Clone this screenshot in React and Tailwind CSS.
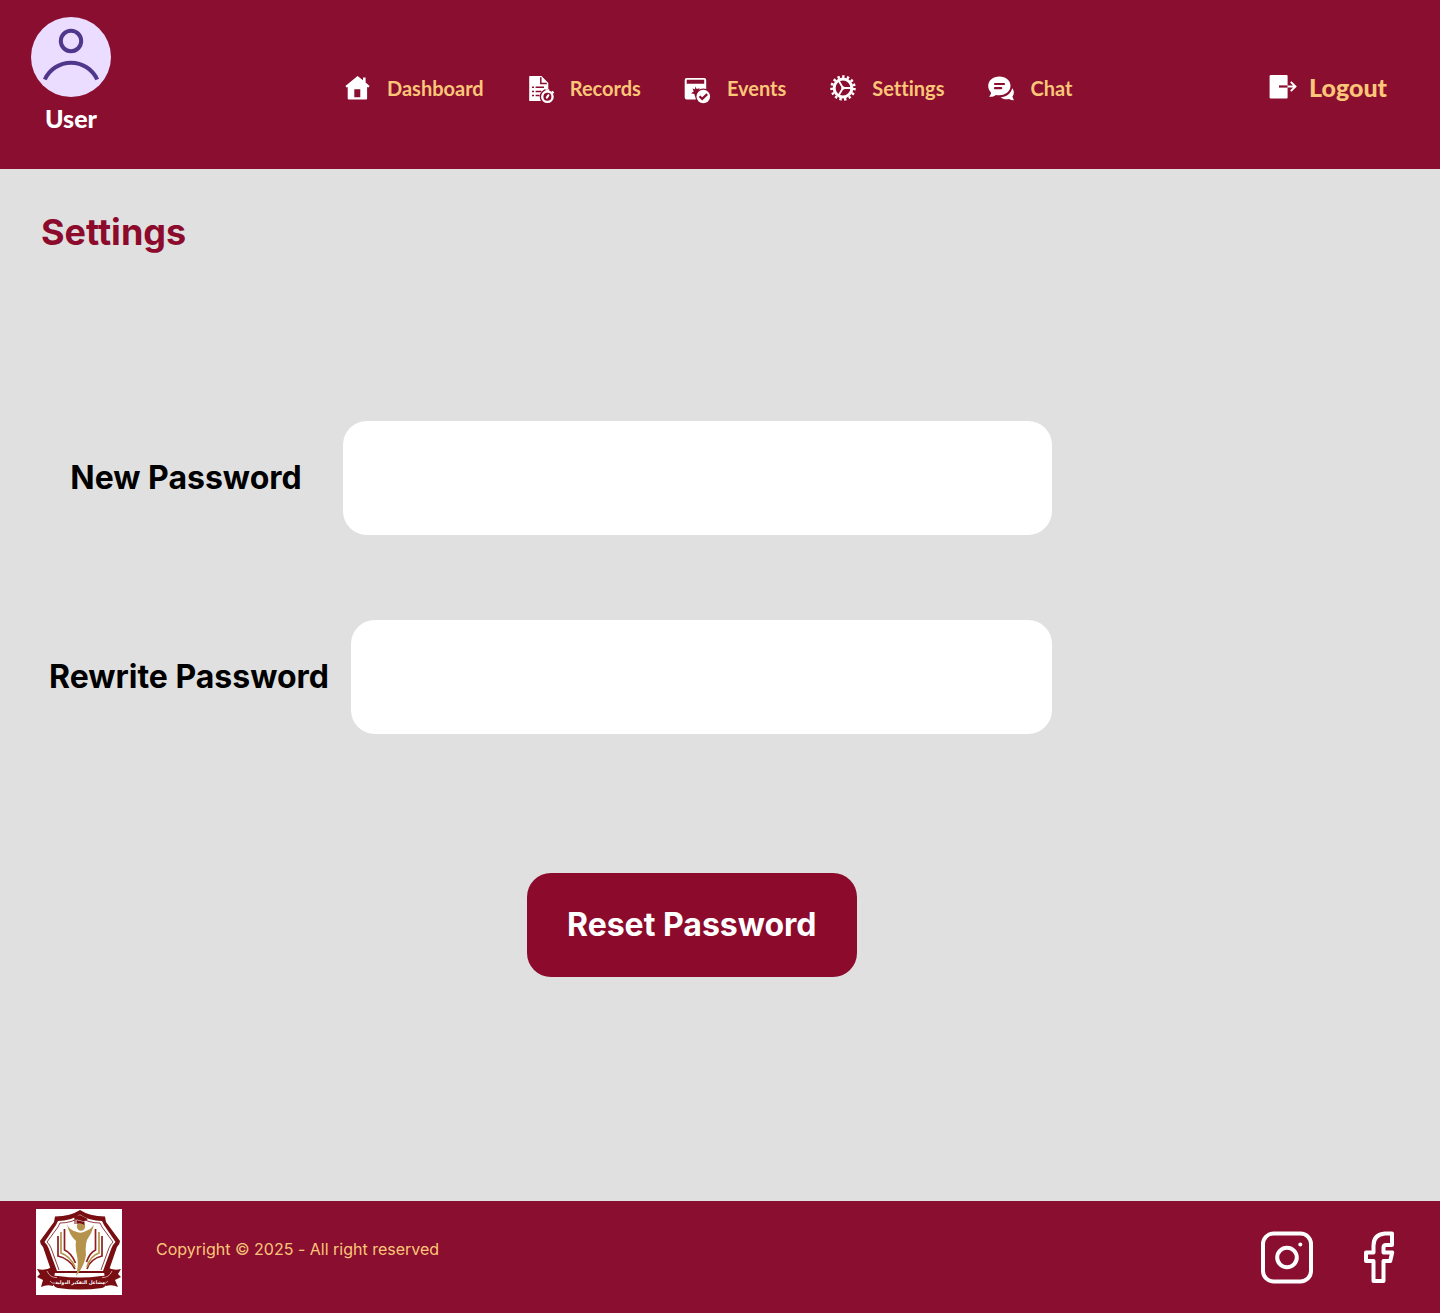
import React from "react";

function HomeIcon() {
  return (
    <svg viewBox="0 0 28 28" className="size-7" fill="#fff" aria-hidden="true">
      <path fillRule="evenodd" d="M13.6 2 19 6.2V3.4h2.6v5.2l4 3.4-1.2 1.4-1.3-.5v11.6q0 1-1 1H4.7q-1 0-1-1V12.9l-1.1.5-1.2-1.5Zm-3.3 13.2v8h6v-8Z" />
    </svg>
  );
}

function RecordsIcon() {
  return (
    <svg viewBox="0 0 28 28" className="size-7 overflow-visible" aria-hidden="true">
      <path fill="#fff" d="M2.200 2.500Q2.200 2 2.800 2H14.500l6.800 7v8l-6 10H2.800q-.6 0-.6-.6Z" />
      <path fill="none" stroke="#890e2f" strokeWidth="1.500" d="M13.800 3.200v6.300h6M5 13.200h2M8.600 13.200h8.400M5 17.400h2M8.600 17.400h5.600M5 21.600h2M8.600 21.600h4" />
      <circle cx="20.400" cy="22.700" r="7.700" fill="#890e2f" />
      <circle cx="20.400" cy="22.700" r="5.200" fill="none" stroke="#fff" strokeWidth="2.400" />
      <path fill="none" stroke="#fff" strokeWidth="2.200" strokeLinecap="round" d="m19.900 23.500 1.400-2.200" />
      <path stroke="#fff" strokeWidth="2" d="M18.600 16.200h3.600M24.800 17.400l1.800 1.800" />
    </svg>
  );
}

function EventsIcon() {
  return (
    <svg viewBox="0 0 28 28" className="size-7 overflow-visible" aria-hidden="true">
      <path fill="#fff" fillRule="evenodd" d="M2.700 4h17.500q2 0 2 2v17.400q0 2-2 2H2.700q-2 0-2-2V6q0-2 2-2Zm0 1.800v4h17.500v-4Z" />
      <path fill="#890e2f" d="m11.3 12.500 1.400 2.600 3.100-.8-1.500 3.100 2.100 2.500-3.200.5-1.900 2.800-1-3.100-3.300-.8 2.700-1.800-1.100-3 2.400.7Z" />
      <circle cx="19.300" cy="22.500" r="8" fill="#890e2f" />
      <circle cx="19.300" cy="22.500" r="6.800" fill="#fff" />
      <path fill="none" stroke="#890e2f" strokeWidth="2.200" d="m15.500 22.300 2.700 2.600 5-4.800" />
    </svg>
  );
}

function GearIcon() {
  return (
    <svg viewBox="0 0 28 28" className="size-7" fill="none" stroke="#fff" aria-hidden="true">
      <circle cx="14" cy="14" r="11.4" strokeWidth="2.7" strokeDasharray="2.4 2.375" />
      <circle cx="14" cy="14" r="8.9" strokeWidth="3" />
      <path strokeWidth="1.8" d="M14 14h8M14 14 9.7 6.8M14 14l-4.3 7.2" />
      <circle cx="14" cy="14" r="1.7" fill="#fff" stroke="none" />
    </svg>
  );
}

function ChatIcon() {
  return (
    <svg viewBox="0 0 28 28" className="size-7" aria-hidden="true">
      <path fill="#fff" d="M25.2 14.3c2.4 2.9 2 6.2.2 8.2l1.5 3.7c-1.8.1-3.3-.3-4.8-1.2-3.2.7-6.2.2-8.4-1.7 5.6-.3 10-3.3 11.5-9Z" />
      <path fill="#fff" d="M12.4 2.6c6.4 0 11.1 4 11.1 9.2s-4.7 9.5-11.1 9.5c-1.3 0-2.4-.1-3.4-.4-2 1.500-4.2 2-7 1.8 1.3-1.2 2-2.4 2-4.2-1.8-1.8-2.8-4-2.8-6.500 0-5.300 4.800-9.400 11.200-9.400Z" />
      <path stroke="#890e2f" strokeWidth="2.200" strokeLinecap="round" d="M8 10h9M8 14.200h6.200" />
    </svg>
  );
}

function LogoutIcon() {
  return (
    <svg viewBox="0 0 28 28" className="size-7" fill="none" stroke="#fff" aria-hidden="true">
      <rect x="0.600" y="2" width="18" height="23.500" rx="1" fill="#fff" stroke="none" />
      <path stroke="#890e2f" strokeWidth="2.2" d="M10 13.500h8.600" />
      <path strokeWidth="2" d="M18.600 13.500h7.900M21.800 8.900l4.600 4.600-4.600 4.600" />
    </svg>
  );
}

function Avatar() {
  return (
    <svg viewBox="0 0 80 80" className="size-20" aria-hidden="true">
      <circle cx="40" cy="40" r="40" fill="#eaddff" />
      <g fill="none" stroke="#4f378b" strokeWidth="4">
        <circle cx="40" cy="24" r="10.200" />
        <path d="M13.800 62.500a28.800 28.800 0 0 1 52.400 0" />
      </g>
    </svg>
  );
}

function SchoolCrest() {
  return (
    <svg viewBox="0 0 86 86" className="size-[86px]" role="img" aria-label="مشاعل التفكير الدولية">
      <path fill="#fff" d="M0 0h86v86H0z" />
      <path
        fill="#780d12"
        fillRule="evenodd"
        d="M44 1Q35 7 19 7.500L18 13 4 32q0 3 3 6l9 26h56l9-26q3-3 3-6L70 13l-1-5.500Q53 7 44 1Zm0 4.500Q53 12 66 12l2 4 11.500 17q-3 3-4 6L67 62H21l-8.500-23q-1-3-4-6L20 16l2-4q13 0 22-6.500Z"
      />
      <path fill="none" stroke="#780d12" strokeWidth=".8" d="M44 8Q36 14 24 14l-2 4-11 15q3 3 4 6l8 22M44 8q8 6 20 6l2 4 11 15q-3 3-4 6l-8 22" />
      <g fill="none" strokeWidth="1.700">
        <path stroke="#8f1f1f" d="M22 27v20q12 3 17 13M66 27v20q-12 3-15 13" />
        <path stroke="#b5934d" d="M25 23v21q9 3 14 14M63 23v21q-9 3-12 14" />
        <path stroke="#8f1f1f" d="M28.500 20v21q7 3 11 13M59.500 20v21q-6 3-9 12" />
      </g>
      <path fill="#b5934d" d="M31 15q2 6 10 8 4 2 9-1 5-2 8-6-2 8-7 15-2 6-1 15-2 12-10 21 3-12 1-20-2-9-1-15-7-6-9-17Z" />
      <circle cx="45" cy="17.500" r="4.200" fill="#b5934d" />
      <path fill="#780d12" d="m38 8 6-2 8 4-4 2.500-9-2.500Zm2.500 3 8 2v3q-4-3-8-1Z" />
      <path fill="none" stroke="#780d12" d="M39 9v6" />
      <path fill="#780d12" d="M1 60q9 2 15-2l3 5-2 14q-6-2-12 1l2-7-6-3 3-3Zm84 0q-8 2-14-2l-3 5 2 14q6-2 12 1l-3-7 6-3-3-3Z" />
      <path fill="#780d12" d="M12 61q2 6 10 6 22 3 43 0 8 0 10-6 0 8-3 11-2 6-6 7-22 3-44 0-5-1-6-7-4-3-4-11Z" />
      <path fill="none" stroke="#fff" strokeWidth=".6" d="M11 62q3 7 10 6.500M76 62q-3 7-10 6.500M14 72q2 3 5 2M72 72q-2 3-5 2" />
      <text x="44" y="75" textAnchor="middle" fill="#fff" fontFamily="DejaVu Sans Condensed, DejaVu Sans, sans-serif" fontSize="5" fontWeight="700" direction="rtl">مشاعل التفكير الدولية</text>
    </svg>
  );
}

function InstagramIcon() {
  return (
    <svg viewBox="0 0 54 54" className="size-[54px]" fill="none" stroke="#fff" aria-hidden="true">
      <rect x="3" y="3.500" width="48" height="48" rx="10.500" strokeWidth="4" />
      <circle cx="27" cy="27.500" r="9.800" strokeWidth="4" />
      <circle cx="40.300" cy="14.500" r="2" fill="#fff" stroke="none" />
    </svg>
  );
}

function FacebookIcon() {
  return (
    <svg viewBox="0 0 32 54" className="h-[54px] w-8" fill="none" stroke="#fff" strokeWidth="4" strokeLinejoin="round" aria-hidden="true">
      <path d="M29 3.500h-7q-11.500 1-11.500 12v7H3v8.500h7.500v20h10V31h6.700l2-8.500h-8.700v-5q0-2.500 2.500-2.500h6Z" />
    </svg>
  );
}

const links = [
  { label: "Dashboard", Icon: HomeIcon },
  { label: "Records", Icon: RecordsIcon },
  { label: "Events", Icon: EventsIcon },
  { label: "Settings", Icon: GearIcon },
  { label: "Chat", Icon: ChatIcon },
];

export default function App() {
  return (
    <div className="flex min-h-screen flex-col bg-[#e0e0e0] font-['Inter',sans-serif] [font-variant-ligatures:none]">
      <header className="flex items-start bg-[#890e2f] pt-[17px] pr-[53px] pb-9 pl-[31px] font-['Lato',sans-serif]">
        <div className="flex w-20 flex-col items-center">
          <Avatar />
          <span className="mt-1.5 text-[25px] leading-[30px] font-black text-white">User</span>
        </div>
        <nav className="mt-[57px] ml-[233px] flex gap-[43px]">
          {links.map(({ label, Icon }) => (
            <a key={label} href="#" className="flex items-center gap-[15px] text-xl leading-7 font-bold text-[#fcc679]">
              <Icon />
              {label}
            </a>
          ))}
        </nav>
        <button type="button" className="mt-[55px] ml-auto flex items-center gap-3 text-[25px] leading-[30px] font-black text-[#fcc679]">
          <LogoutIcon />
          Logout
        </button>
      </header>

      <main className="flex-1 px-[41px] pt-10">
        <h1 className="text-4xl leading-[46px] font-bold text-[#8c0b2c]">Settings</h1>
        <form className="mt-[166px] flex max-w-[1011px] flex-col">
          <div className="flex items-center gap-3">
            <label htmlFor="new-password" className="w-[290px] shrink-0 text-center text-[32px] leading-10 font-bold text-black">
              New Password
            </label>
            <input id="new-password" type="password" className="h-[114px] min-w-0 flex-1 rounded-3xl bg-white px-8 text-3xl" />
          </div>
          <div className="mt-[85px] flex items-center gap-3.5">
            <label htmlFor="rewrite-password" className="w-[296px] shrink-0 text-center text-[32px] leading-10 font-bold text-black">
              Rewrite Password
            </label>
            <input id="rewrite-password" type="password" className="h-[114px] min-w-0 flex-1 rounded-3xl bg-white px-8 text-3xl" />
          </div>
          <button type="button" className="mt-[139px] ml-[486px] self-start rounded-3xl bg-[#8c0b2c] px-10 py-8 text-[32px] leading-10 font-bold text-white">
            Reset Password
          </button>
        </form>
      </main>

      <footer className="flex items-start bg-[#890e2f] pt-2 pr-[45px] pb-[18px] pl-9">
        <SchoolCrest />
        <p className="mt-7 ml-[34px] text-base leading-6 text-[#fcc679]">Copyright © 2025 - All right reserved</p>
        <div className="mt-[21px] ml-auto flex gap-[49px]">
          <a href="#" aria-label="Instagram"><InstagramIcon /></a>
          <a href="#" aria-label="Facebook"><FacebookIcon /></a>
        </div>
      </footer>
    </div>
  );
}
